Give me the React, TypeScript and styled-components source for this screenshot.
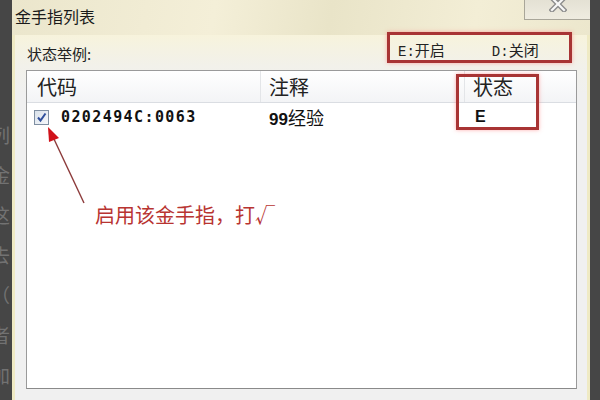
import React from 'react';
import styled, { createGlobalStyle } from 'styled-components';

const GlobalStyle = createGlobalStyle`
    *, *::before, *::after {
        box-sizing: border-box;
    }

    html, body {
        margin: 0;
        padding: 0;
        width: 600px;
        height: 400px;
        overflow: hidden;
        background: #464646;
        font-family: "Noto Sans CJK SC", "Noto Sans", sans-serif;
    }
`;

const Page = styled.div`
    display: flex;
    width: 600px;
    height: 400px;
    background: #464646;
`;

const SideStrip = styled.div<{ width: number }>`
    width: ${p => p.width}px;
    flex: 0 0 auto;
    overflow: hidden;
    display: flex;
    flex-direction: column;
    padding-top: 124px;
    gap: 19px;
`;

const GhostChar = styled.span`
    display: block;
    margin-left: -9px;
    font-size: 19px;
    line-height: 21px;
    color: #727272;
    white-space: nowrap;
`;

const Dialog = styled.div`
    position: relative;
    flex: 1 1 auto;
    display: flex;
    flex-direction: column;
    border-left: 3px solid #efeac4;
    border-right: 3px solid #efeac4;
    background: #f0f0f0;
`;

const TitleBar = styled.div`
    height: 35px;
    flex: 0 0 auto;
    display: flex;
    align-items: flex-start;
    margin-left: -3px;
    margin-right: -3px;
    background: linear-gradient(100deg, #ebe6cc 0%, #f4efd8 35%, #e9e4c8 55%, #f3eed6 80%, #ece7cd 100%);
`;

const Title = styled.div`
    padding: 6px 0 0 3px;
    font-size: 16px;
    line-height: 20px;
    color: #1a1a1a;
`;

const CloseButton = styled.div`
    margin-left: auto;
    width: 66px;
    height: 20px;
    border-left: 1px solid #a9a699;
    border-bottom: 1px solid #a9a699;
    background: linear-gradient(#e4e1d4, #efece0);
    display: flex;
    justify-content: center;
    overflow: hidden;

    svg {
        margin-top: -4px;
    }
`;

const Body = styled.div`
    flex: 1 1 auto;
    display: flex;
    flex-direction: column;
    padding: 0 10px 11px 11px;
    background: linear-gradient(#f7f3dc 0px, #f2f1ea 30px, #f0f0f0 60px);
`;

const LegendRow = styled.div`
    height: 35px;
    flex: 0 0 auto;
    display: flex;
    align-items: flex-start;
`;

const LegendLabel = styled.div`
    padding-top: 9px;
    padding-left: 1px;
    font-size: 15px;
    line-height: 20px;
    color: #222;
`;

const LegendFrame = styled.div`
    margin-left: auto;
    margin-right: 5px;
    margin-top: -3px;
    width: 185px;
    height: 31px;
    border: 3px solid #a83434;
    box-shadow: 0 0 4px rgba(255, 110, 110, 0.55);
    display: flex;
    align-items: center;
    padding-left: 8px;
    padding-top: 7px;
    gap: 47px;
`;

const LegendItem = styled.span`
    font-size: 15px;
    line-height: 18px;
    color: #222;

    b {
        font-family: "Liberation Mono", monospace;
        font-weight: normal;
        font-size: 14px;
    }
`;

const ListBox = styled.div`
    position: relative;
    flex: 1 1 auto;
    border: 1px solid #9a9a9a;
    border-bottom-color: #8a8a8a;
    background: #ffffff;
`;

const Columns = styled.div<{ header?: boolean }>`
    display: grid;
    grid-template-columns: 233px 204px 1fr;
    height: ${p => (p.header ? 32 : 28)}px;
    align-items: center;
    background: ${p => (p.header ? 'linear-gradient(#ffffff, #f3f4f6)' : '#ffffff')};
    border-bottom: ${p => (p.header ? '1px solid #dadde2' : 'none')};
`;

const HeadCell = styled.div<{ pad: number; divider?: boolean }>`
    height: 100%;
    display: flex;
    align-items: center;
    padding-left: ${p => p.pad}px;
    border-left: ${p => (p.divider ? '1px solid #e3e5e8' : 'none')};
    font-size: 20px;
    color: #222;
`;

const Cell = styled.div<{ pad: number }>`
    display: flex;
    align-items: center;
    gap: 12px;
    padding-left: ${p => p.pad}px;
    font-size: 18px;
    color: #111;
`;

const CheckBox = styled.span`
    width: 15px;
    height: 15px;
    border: 1px solid #7f8fa2;
    background: linear-gradient(135deg, #d9e1ea, #f6f8fb);
    display: flex;
    align-items: center;
    justify-content: center;
`;

const Code = styled.span`
    font-family: "DejaVu Sans Mono", "Liberation Mono", monospace;
    font-weight: bold;
    font-size: 15px;
    letter-spacing: 1.4px;
    color: #111;
`;

const Num = styled.b`
    font-family: "Liberation Sans", sans-serif;
    font-size: 17px;
`;

const StateMark = styled.span`
    font-family: "Liberation Sans", sans-serif;
    font-weight: bold;
    font-size: 16px;
    margin-left: 2px;
`;

const StatusFrame = styled.div`
    position: absolute;
    left: 429px;
    top: 3px;
    width: 83px;
    height: 56px;
    border: 3px solid #a83434;
    box-shadow: 0 0 4px rgba(255, 110, 110, 0.55);
    pointer-events: none;
`;

const Arrow = styled.svg`
    position: absolute;
    left: 10px;
    top: 50px;
`;

const Note = styled.div`
    position: absolute;
    left: 68px;
    top: 131px;
    font-size: 20px;
    line-height: 26px;
    color: #b83431;
    text-shadow: 0 0 6px #fff;
`;

const ghosts = ['列', '金', '这', '去', '（', '者', '加'];

export default function App() {
    return (
        <Page>
            <GlobalStyle />
            <SideStrip width={12}>
                {ghosts.map(c => (
                    <GhostChar key={c}>{c}</GhostChar>
                ))}
            </SideStrip>
            <Dialog>
                <TitleBar>
                    <Title>金手指列表</Title>
                    <CloseButton>
                        <svg width="18" height="16" viewBox="0 0 18 16">
                            <path d="M3 2 L15 14 M15 2 L3 14" stroke="#8d8d8d" strokeWidth="5" strokeLinecap="square" />
                            <path d="M3 2 L15 14 M15 2 L3 14" stroke="#f7f7f7" strokeWidth="2.2" strokeLinecap="square" />
                        </svg>
                    </CloseButton>
                </TitleBar>
                <Body>
                    <LegendRow>
                        <LegendLabel>状态举例:</LegendLabel>
                        <LegendFrame>
                            <LegendItem><b>E:</b>开启</LegendItem>
                            <LegendItem><b>D:</b>关闭</LegendItem>
                        </LegendFrame>
                    </LegendRow>
                    <ListBox>
                        <Columns header>
                            <HeadCell pad={10}>代码</HeadCell>
                            <HeadCell pad={8} divider>注释</HeadCell>
                            <HeadCell pad={8} divider>状态</HeadCell>
                        </Columns>
                        <Columns>
                            <Cell pad={7}>
                                <CheckBox>
                                    <svg width="11" height="11" viewBox="0 0 11 11">
                                        <path d="M2 5.5 L4.5 8.5 L9.5 1.5" fill="none" stroke="#2f4f9c" strokeWidth="2" />
                                    </svg>
                                </CheckBox>
                                <Code>0202494C:0063</Code>
                            </Cell>
                            <Cell pad={9}>
                                <span><Num>99</Num>经验</span>
                            </Cell>
                            <Cell pad={9}>
                                <StateMark>E</StateMark>
                            </Cell>
                        </Columns>
                        <StatusFrame />
                        <Arrow width="70" height="90" viewBox="0 0 70 90">
                            <path d="M47 82 L16 16" stroke="#8c3a3a" strokeWidth="1.4" fill="none" />
                            <path d="M11 6 L22 17 L12 21 Z" fill="#d0121a" />
                        </Arrow>
                        <Note>启用该金手指，打√</Note>
                    </ListBox>
                </Body>
            </Dialog>
            <SideStrip width={10} />
        </Page>
    );
}
